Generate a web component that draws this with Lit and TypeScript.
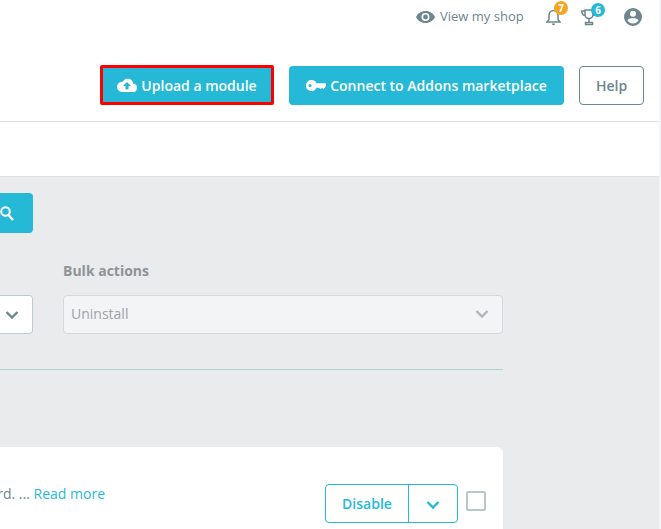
import { LitElement, html, css } from "lit";
import { customElement } from "lit/decorators.js";

const chevron = (c: string) => html`<svg class="chev" width="16" height="10" viewBox="0 0 16 10"><path d="M2.500 2l5.500 5.500L13.500 2" fill="none" stroke=${c} stroke-width="2.400"/></svg>`;

@customElement("app-root")
export class AppRoot extends LitElement {
  static styles = css`
    :host { display: block; width: 661px; height: 529px; overflow: hidden; background: #f4f5f6; font-family: "Open Sans", sans-serif; color: #6c868e; }
    .shell { width: 659px; height: 529px; overflow: hidden; background: #e9ebed; }
    .head { background: #fff; height: 121px; border-bottom: 1px solid #dfe1e3; box-sizing: content-box; }
    .top { display: flex; align-items: center; height: 33px; }
    .shop { display: flex; align-items: center; gap: 5px; margin-left: 416px; font-size: 13px; color: #6c868e; width: 108px; }
    .shop span { padding-bottom: 2px; }
    .iconwrap { position: relative; display: flex; }
    .bell { margin-left: 22px; }
    .trophy { margin-left: 20px; }
    .user { margin-left: 27px; }
    .badge { position: absolute; width: 14px; height: 14px; border-radius: 50%; color: #fff; font-size: 10px; font-weight: 700; line-height: 14px; text-align: center; top: -7px; left: 8px; }
    .badge.or { background: #f5a623; }
    .badge.bl { background: #25b9d7; left: 10px; top: -5px; }
    .actions { display: flex; align-items: center; margin-top: 33px; height: 39px; }
    .btn { box-sizing: border-box; height: 39px; border-radius: 4px; display: flex; align-items: center; justify-content: center; font-size: 14px; font-weight: 600; color: #fff; background: #25b9d7; gap: 4px; white-space: nowrap; }
    .upload { width: 174px; height: 40px; margin-left: 100px; margin-top: -1px; border: 3px solid #f00; border-radius: 2px; }
    .connect { width: 275px; margin-left: 15px; }
    .help { width: 65px; margin-left: 15px; background: #fff; border: 1px solid #6c868e; color: #6c868e; }
    .tabs { background: #fff; height: 54px; border-bottom: 1px solid #dfe1e3; }
    .content { padding: 16px 156px 0 0; }
    .search { width: 33px; height: 40px; background: #25b9d7; border-radius: 0 4px 4px 0; display: flex; align-items: center; justify-content: flex-start; }
    .filters { display: grid; grid-template-columns: 33px 440px; column-gap: 30px; margin-top: 28px; align-items: end; }
    .label { font-size: 14px; font-weight: 700; color: #8f9397; line-height: 20px; margin-bottom: 14px; }
    .select { box-sizing: border-box; height: 39px; display: flex; align-items: center; border: 1px solid #bbcdd2; border-radius: 0 4px 4px 0; background: #fff; border-left: 0; justify-content: flex-end; padding-right: 12px; }
    .select.off { background: #f3f4f6; border: 1px solid #d3dadc; border-radius: 4px; justify-content: space-between; padding: 0 12px 2px 7px; font-size: 14px; color: #9ba3a8; }
    .rule { width: 503px; height: 1px; background: #b5d3d1; margin-top: 35px; }
    .card { width: 503px; height: 90px; margin-top: 77px; background: #fff; border-radius: 0 6px 0 0; position: relative; display: flex; overflow: hidden; }
    .desc { margin: 37px 0 0 0; width: 105px; flex: none; display: flex; justify-content: flex-end; font-size: 14px; line-height: 20px; color: #6c868e; white-space: pre; }
    .desc a { color: #25b9d7; }
    .row { display: flex; margin-left: 220px; margin-top: 37px; align-items: flex-start; }
    .split { box-sizing: border-box; width: 133px; height: 39px; display: flex; border: 1px solid #25b9d7; border-radius: 4px; color: #25b9d7; font-size: 14px; font-weight: 600; }
    .split span { width: 82px; display: flex; align-items: center; justify-content: center; border-right: 1px solid #25b9d7; }
    .split div { flex: 1; display: flex; align-items: center; justify-content: center; padding-top: 2px; }
    .check { box-sizing: border-box; width: 20px; height: 20px; margin: 7px 0 0 8px; border: 2px solid #b7c6cb; border-radius: 2px; background: #fff; }
  `;

  render() {
    return html`<div class="shell">
      <div class="head">
        <div class="top">
          <div class="shop">
            <svg width="19" height="14" viewBox="0 0 19 14"><path fill="#6c868e" d="M9.500 1C5.200 1 1.600 3.500 0 7c1.600 3.500 5.200 6 9.500 6S17.400 10.500 19 7C17.400 3.500 13.800 1 9.500 1zM9.500 11a4 4 0 1 1 0-8 4 4 0 0 1 0 8zm0-6.400a2.400 2.400 0 1 0 0 4.800 2.400 2.400 0 0 0 0-4.800z"/></svg>
            <span>View my shop</span>
          </div>
          <div class="iconwrap bell">
            <svg width="15" height="18" viewBox="0 0 15 18"><path fill="none" stroke="#6c868e" stroke-width="1.500" d="M1 14h13l-2-2.500V7.500C12 4.500 10 2.500 7.500 2.500S3 4.500 3 7.500v4z"/><path fill="#6c868e" d="M5.800 15.500h3.400a1.700 1.700 0 0 1-3.400 0z"/></svg>
            <span class="badge or">7</span>
          </div>
          <div class="iconwrap trophy">
            <svg width="16" height="18" viewBox="0 0 16 18"><path fill="none" stroke="#6c868e" stroke-width="1.500" d="M4 2h8v4.500c0 2.300-1.800 4-4 4s-4-1.700-4-4zM4 3H.8c0 2.500 1.200 4.300 3.400 4.800M12 3h3.200c0 2.500-1.200 4.300-3.400 4.800M8 10.500V14M4.500 14.500h7v2h-7z"/></svg>
            <span class="badge bl">6</span>
          </div>
          <div class="iconwrap user">
            <svg width="18" height="18" viewBox="0 0 18 18"><path fill="#6c868e" d="M9 0a9 9 0 1 0 0 18A9 9 0 0 0 9 0zm0 2.700a3 3 0 1 1 0 6 3 3 0 0 1 0-6zm0 12.800a6.600 6.600 0 0 1-5.400-2.800C3.600 11 7 10.100 9 10.100s5.400.9 5.400 2.600A6.600 6.600 0 0 1 9 15.500z"/></svg>
          </div>
        </div>
        <div class="actions">
          <div class="btn upload">
            <svg width="20" height="14" viewBox="0 0 20 14"><path fill="#fff" d="M16.200 5.800A5.500 5.500 0 0 0 5.800 3.800 4.500 4.500 0 0 0 4.500 14h11a4 4 0 0 0 .7-8.200zM11.500 8v3.500h-3V8H6l4-4 4 4z"/></svg>
            <span>Upload a module</span>
          </div>
          <div class="btn connect">
            <svg width="20" height="11" viewBox="0 0 20 11"><path fill="#fff" fill-rule="evenodd" d="M5.500 0a5.500 5.500 0 1 0 5 7.800H13l1.500 1.500L16 7.800l1.500 1.500L20 6V3.200h-9.500A5.500 5.500 0 0 0 5.500 0zM4 3.900a1.600 1.600 0 1 1 0 3.200 1.600 1.600 0 0 1 0-3.200z"/></svg>
            <span>Connect to Addons marketplace</span>
          </div>
          <div class="btn help">Help</div>
        </div>
      </div>
      <div class="tabs"></div>
      <div class="content">
        <div class="search">
          <svg width="14" height="15" viewBox="0 0 14 15"><circle cx="5.500" cy="5.500" r="4.300" fill="none" stroke="#fff" stroke-width="2"/><path d="M8.500 9l4.500 5" stroke="#fff" stroke-width="2.400"/></svg>
        </div>
        <div class="filters">
          <div class="select">${chevron("#6c868e")}</div>
          <div>
            <div class="label">Bulk actions</div>
            <div class="select off"><span>Uninstall</span>${chevron("#b0b5b8")}</div>
          </div>
        </div>
        <div class="rule"></div>
        <div class="card">
          <div class="desc"><span>rd. ... </span><a>Read more</a></div>
          <div class="row">
            <div class="split"><span>Disable</span><div>${chevron("#25b9d7")}</div></div>
            <div class="check"></div>
          </div>
        </div>
      </div>
    </div>`;
  }
}
